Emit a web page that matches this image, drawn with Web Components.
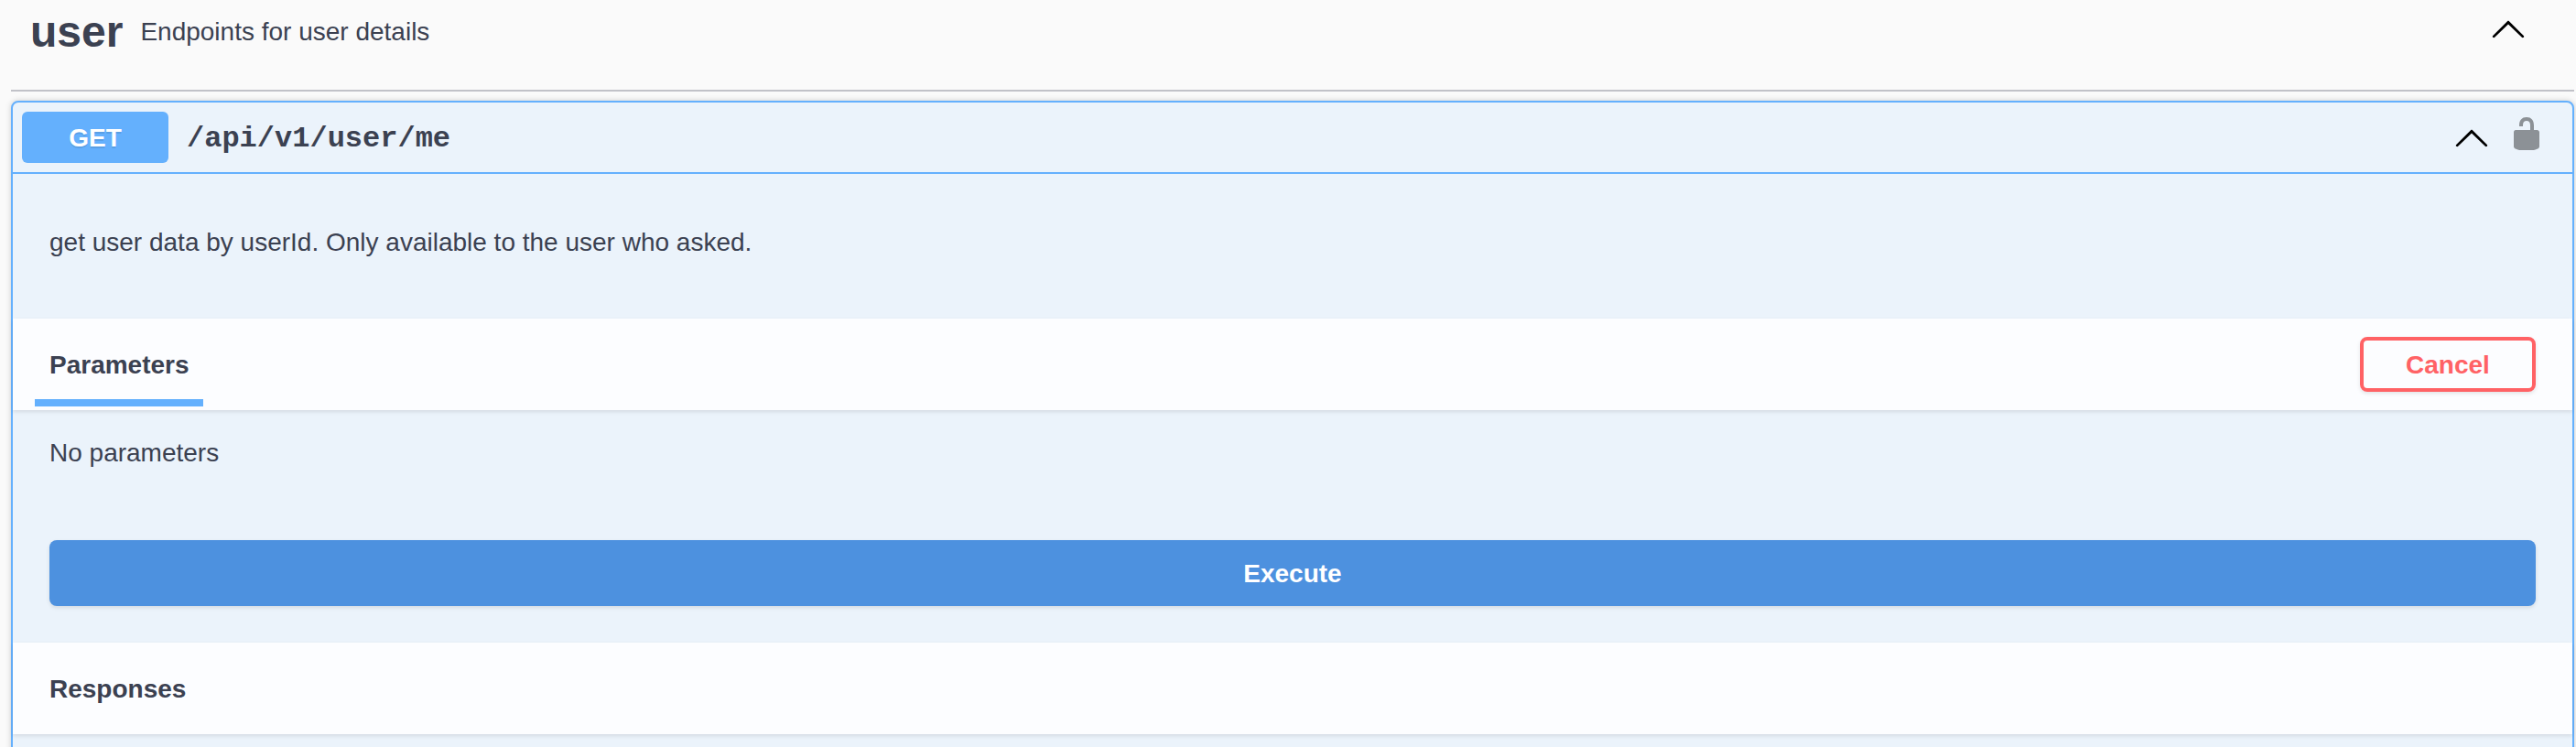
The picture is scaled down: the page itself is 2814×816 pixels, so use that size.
<!DOCTYPE html>
<html lang="en">
<head>
<meta charset="utf-8">
<title>API documentation</title>
<style>
html,body{margin:0;height:816px;overflow:hidden;background:#fafafa}
body{font-family:"Liberation Sans",Arial,sans-serif;font-size:28px;line-height:32px;color:#3b4151}
</style>
</head>
<body>
<api-page>
  <tag-section name="user" description="Endpoints for user details">
    <operation-block method="GET" path="/api/v1/user/me">
      <op-description>get user data by userId. Only available to the user who asked.</op-description>
      <section-header active>Parameters<op-button slot="action" kind="cancel">Cancel</op-button></section-header>
      <op-parameters>No parameters</op-parameters>
      <execute-wrapper><op-button kind="execute">Execute</op-button></execute-wrapper>
      <section-header>Responses</section-header>
    </operation-block>
  </tag-section>
</api-page>
<script>
const define = (tag, render) => customElements.define(tag, class extends HTMLElement {
  constructor() {
    super();
    this.attachShadow({ mode: 'open' }).innerHTML = render(this);
  }
});

define('api-page', () => `
<style>
:host{display:block;box-sizing:border-box;height:816px;padding:0 2px 0 12px;overflow:hidden}
</style><slot></slot>`);

define('chevron-up', () => `
<style>:host{display:block;width:40px;height:40px}svg{display:block}</style>
<svg width="40" height="40" viewBox="0 0 20 20" fill="#000"><path d="M17.418 14.908c.272.268.709.268.979 0s.271-.701 0-.969L10.489 6.109c-.27-.268-.707-.268-.979 0L1.602 13.939c-.27.268-.27.701 0 .969.271.268.709.268.979 0L10 7.767l7.418 7.141z"/></svg>`);

define('unlocked-icon', () => `
<style>:host{display:block;width:40px;height:40px}svg{display:block}</style>
<svg width="40" height="40" viewBox="0 0 20 20" fill="#000" opacity=".4"><path d="M15.8 8H14V5.6C14 2.703 12.665 1 10 1 7.334 1 6 2.703 6 5.6V6h2v-.801C8 3.754 8.797 3 10 3c1.203 0 2 .754 2 2.199V8H4c-.553 0-1 .646-1 1.199V17c0 .549.428 1.139.951 1.307l1.197.387C5.672 18.861 6.55 19 7.1 19h5.8c.549 0 1.428-.139 1.951-.307l1.196-.387c.524-.167.953-.757.953-1.306V9.199C17 8.646 16.352 8 15.8 8z"/></svg>`);

define('tag-section', el => `
<style>
:host{display:block}
header{display:flex;align-items:flex-start;height:98px;box-sizing:content-box;border-bottom:2px solid #c1c2c8;padding:0 52px 0 21px;margin-bottom:10px}
h3{margin:7px 19px 0 0;font-size:48px;line-height:56px;font-weight:700}
p{margin:19px 0 0;flex:1}
chevron-up{margin-top:11px}
</style>
<header><h3>${el.getAttribute('name')}</h3><p>${el.getAttribute('description')}</p><chevron-up></chevron-up></header>
<slot></slot>`);

define('operation-block', el => `
<style>
:host{display:block;box-sizing:border-box;height:760px;border:2px solid #64b0fd;border-radius:8px;background:#ebf3fb;box-shadow:0 0 6px rgba(0,0,0,.19)}
.summary{display:flex;align-items:center;padding:10px 30px 10px 10px;height:56px;border-bottom:2px solid #64b0fd}
.method{width:160px;height:56px;border-radius:6px;background:#64b0fd;color:#fff;font-weight:700;text-align:center;line-height:57px;text-shadow:0 2px 0 rgba(0,0,0,.1)}
.path{flex:1;padding:4px 0 0 20px;font:700 32px/40px "Liberation Mono","Courier New",monospace}
unlocked-icon{margin:-8px 0 0 20px}
</style>
<div class="summary"><div class="method">${el.getAttribute('method')}</div><div class="path">${el.getAttribute('path')}</div><chevron-up></chevron-up><unlocked-icon></unlocked-icon></div>
<slot></slot>`);

define('op-description', () => `
<style>:host{display:block;box-sizing:border-box;height:158px;padding:59px 40px 0}</style><slot></slot>`);

define('section-header', el => `
<style>
:host{display:flex;align-items:center;justify-content:space-between;box-sizing:border-box;height:100px;padding:0 40px 0 24px;background:#fcfdff;box-shadow:0 2px 4px rgba(0,0,0,.1)}
h4{box-sizing:border-box;height:100px;margin:0;padding:35px 16px 0;font-size:28px;line-height:32px;font-weight:700}
h4.active::after{content:"";display:block;height:8px;margin:21px -15.3px 0 -15.7px;background:#64b0fd}
</style>
<h4 class="${el.hasAttribute('active') ? 'active' : ''}"><slot></slot></h4><slot name="action"></slot>`);

define('op-parameters', () => `
<style>:host{display:block;box-sizing:border-box;height:142px;padding:31px 40px 0}</style><slot></slot>`);

define('execute-wrapper', () => `
<style>:host{display:block;padding:0 40px 40px}</style><slot></slot>`);

define('op-button', () => `
<style>
:host{display:block}
button{display:block;box-sizing:border-box;margin:0;padding:2px 0 0;border-radius:8px;font:inherit;font-weight:700;text-align:center;box-shadow:0 2px 4px rgba(0,0,0,.1)}
:host([kind=cancel]) button{width:192px;height:60px;border:4px solid #ff6265;background:transparent;color:#ff6265}
:host([kind=execute]) button{width:100%;height:72px;border:0;background:#4d91df;color:#fff}
</style>
<button><slot></slot></button>`);
</script>
</body>
</html>
